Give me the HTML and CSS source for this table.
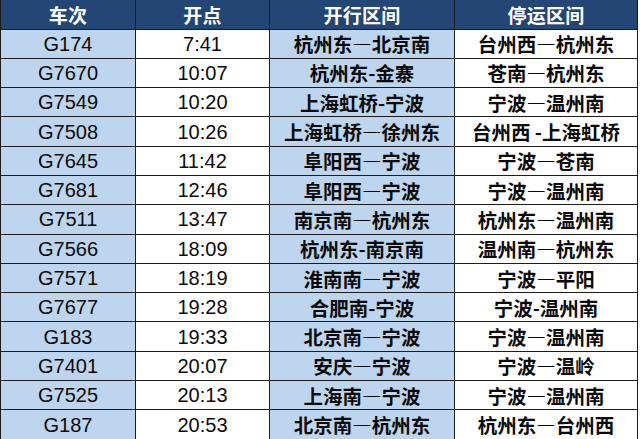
FILE: index.html
```html
<!DOCTYPE html>
<html lang="zh-CN">
<head>
<meta charset="utf-8">
<link rel="stylesheet" href="styles.css">
</head>
<body>
<div class="table">
  <div class="cell head">车次</div><div class="cell head">开点</div><div class="cell head">开行区间</div><div class="cell head">停运区间</div>

  <div class="cell num blue">G174</div><div class="cell num">7:41</div><div class="cell cn blue">杭州东—北京南</div><div class="cell cn">台州西—杭州东</div>
  <div class="cell num blue">G7670</div><div class="cell num">10:07</div><div class="cell cn blue">杭州东-金寨</div><div class="cell cn">苍南—杭州东</div>
  <div class="cell num blue">G7549</div><div class="cell num">10:20</div><div class="cell cn blue">上海虹桥-宁波</div><div class="cell cn">宁波—温州南</div>
  <div class="cell num blue">G7508</div><div class="cell num">10:26</div><div class="cell cn blue">上海虹桥—徐州东</div><div class="cell cn">台州西 -上海虹桥</div>
  <div class="cell num blue">G7645</div><div class="cell num">11:42</div><div class="cell cn blue">阜阳西—宁波</div><div class="cell cn">宁波—苍南</div>
  <div class="cell num blue">G7681</div><div class="cell num">12:46</div><div class="cell cn blue">阜阳西—宁波</div><div class="cell cn">宁波—温州南</div>
  <div class="cell num blue">G7511</div><div class="cell num">13:47</div><div class="cell cn blue">南京南—杭州东</div><div class="cell cn">杭州东—温州南</div>
  <div class="cell num blue">G7566</div><div class="cell num">18:09</div><div class="cell cn blue">杭州东-南京南</div><div class="cell cn">温州南—杭州东</div>
  <div class="cell num blue">G7571</div><div class="cell num">18:19</div><div class="cell cn blue">淮南南—宁波</div><div class="cell cn">宁波—平阳</div>
  <div class="cell num blue">G7677</div><div class="cell num">19:28</div><div class="cell cn blue">合肥南-宁波</div><div class="cell cn">宁波-温州南</div>
  <div class="cell num blue">G183</div><div class="cell num">19:33</div><div class="cell cn blue">北京南—宁波</div><div class="cell cn">宁波—温州南</div>
  <div class="cell num blue">G7401</div><div class="cell num">20:07</div><div class="cell cn blue">安庆—宁波</div><div class="cell cn">宁波—温岭</div>
  <div class="cell num blue">G7525</div><div class="cell num">20:13</div><div class="cell cn blue">上海南—宁波</div><div class="cell cn">宁波—温州南</div>
  <div class="cell num blue">G187</div><div class="cell num">20:53</div><div class="cell cn blue">北京南—杭州东</div><div class="cell cn">杭州东—台州西</div>
</div>
</body>
</html>
```
FILE: styles.css
```css
html, body {
  margin: 0;
  padding: 0;
  background: #ffffff;
  overflow: hidden;
}
.table {
  width: 637px;
  display: grid;
  grid-template-columns: 135px 134px 185px 183px;
  grid-template-rows: 29.5px repeat(14, 29.3px);
  border-left: 1.5px solid #1c1c1c;
  box-sizing: border-box;
}
.cell {
  box-sizing: border-box;
  border-right: 1.5px solid #1c1c1c;
  border-bottom: 1.5px solid #1c1c1c;
  display: flex;
  align-items: center;
  justify-content: center;
  white-space: nowrap;
  color: #0a0a0a;
  background: #ffffff;
}
.head {
  background: #244675;
  color: #ffffff;
  font-family: "Noto Sans CJK SC", "Noto Sans", sans-serif;
  font-weight: 700;
  font-size: 19px;
  letter-spacing: 0.3px;
}
.blue {
  background: #bdd5ee;
}
.num {
  font-family: "Liberation Sans", Arial, sans-serif;
  font-size: 20px;
  padding-top: 1px;
}
.cn {
  font-family: "Noto Sans CJK SC", "Noto Sans", sans-serif;
  font-weight: 700;
  font-size: 19.5px;
}
```
